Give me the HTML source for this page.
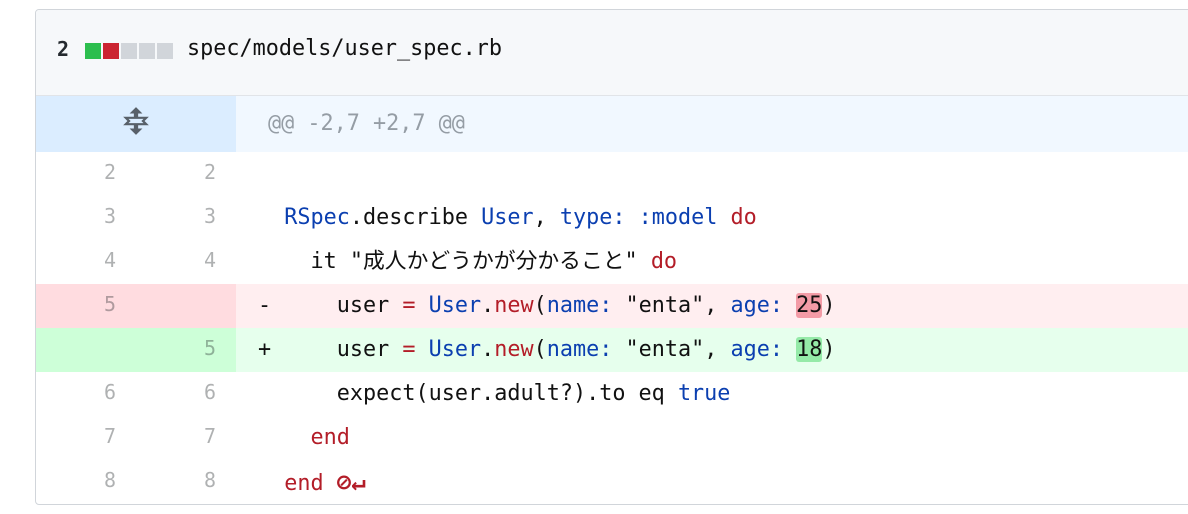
<!DOCTYPE html>
<html><head><meta charset="utf-8"><style>
body{margin:0;background:#fff;width:1188px;height:514px;overflow:hidden;position:relative;font-family:"DejaVu Sans Mono","Noto Sans CJK JP",monospace;}
.box{position:absolute;left:35px;top:9px;width:1170px;height:494px;border:1px solid #d1d5da;border-radius:4px;overflow:hidden;}
.hdr{height:85px;background:#f6f8fa;border-bottom:1px solid #e1e4e8;position:relative;}
.hdr .n{position:absolute;left:21px;top:27px;font:bold 20px "DejaVu Sans Mono",monospace;color:#24292e;}
.sq{position:absolute;top:33px;width:16px;height:16px;}
.fn{position:absolute;left:151px;top:26px;font-size:21.8px;color:#111;}
.row{position:relative;height:44px;font-size:21.8px;line-height:44px;}
.g{position:absolute;top:0;height:100%;width:100px;text-align:right;box-sizing:border-box;padding-right:20px;color:rgba(27,31,35,.35);font-size:20px;line-height:40px;}
.g1{left:0}.g2{left:100px}
.c{position:absolute;left:200px;top:0;right:0;height:100%;padding-left:22px;white-space:pre;color:#111;}
.k{color:#b31d28}.b{color:#0b3fb0}.s{color:#111}
</style></head><body>
<div class="box">
<div class="hdr"><span class="n">2</span>
<span class="sq" style="left:49px;background:#2cbe4e"></span>
<span class="sq" style="left:67px;background:#cb2431"></span>
<span class="sq" style="left:85px;background:#d1d5da"></span>
<span class="sq" style="left:103px;background:#d1d5da"></span>
<span class="sq" style="left:121px;background:#d1d5da"></span>
<span class="fn">spec/models/user_spec.rb</span></div>
<div class="row" style="height:56px;line-height:56px;background:#f1f8ff">
<div style="position:absolute;left:0;top:0;width:200px;height:56px;background:#dbedff"></div>
<svg style="position:absolute;left:85px;top:10px" width="30" height="30" viewBox="0 0 28 28"><path d="M14 1 L8 7 H12 V10 H2 L6 14 L2 18 H12 V21 H8 L14 27 L20 21 H16 V18 H26 L22 14 L26 10 H16 V7 H20 Z M12 12 H21 L19 14 L21 16 H7 L9 14 L7 12 Z" fill="#586069" fill-rule="evenodd"/></svg>
<div class="c" style="left:200px;padding-left:32px;color:#959da5;">@@ -2,7 +2,7 @@</div></div>
<div class="row"><div class="g g1">2</div><div class="g g2">2</div><div class="c"> </div></div>
<div class="row"><div class="g g1">3</div><div class="g g2">3</div><div class="c">  <span class="b">RSpec</span>.describe <span class="b">User</span>, <span class="b">type:</span> <span class="b">:model</span> <span class="k">do</span></div></div>
<div class="row"><div class="g g1">4</div><div class="g g2">4</div><div class="c">    it <span class="s">"成人かどうかが分かること"</span> <span class="k">do</span></div></div>
<div class="row" style="background:#ffeef0"><div class="g g1" style="background:#ffdce0">5</div><div class="g g2" style="background:#ffdce0"></div><div class="c">-     user <span class="k">=</span> <span class="b">User</span>.<span class="k">new</span>(<span class="b">name:</span> <span class="s">"enta"</span>, <span class="b">age:</span> <span style="background:#f39ba6;border-radius:3px">25</span>)</div></div>
<div class="row" style="background:#e6ffed"><div class="g g1" style="background:#cdffd8"></div><div class="g g2" style="background:#cdffd8">5</div><div class="c">+     user <span class="k">=</span> <span class="b">User</span>.<span class="k">new</span>(<span class="b">name:</span> <span class="s">"enta"</span>, <span class="b">age:</span> <span style="background:#95eaa8;border-radius:3px">18</span>)</div></div>
<div class="row"><div class="g g1">6</div><div class="g g2">6</div><div class="c">      expect(user.adult?).to eq <span class="b">true</span></div></div>
<div class="row"><div class="g g1">7</div><div class="g g2">7</div><div class="c">    <span class="k">end</span></div></div>
<div class="row"><div class="g g1">8</div><div class="g g2">8</div><div class="c">  <span class="k">end <b style="font-size:24px">⊘↵</b></span></div></div>
</div>
</body></html>
